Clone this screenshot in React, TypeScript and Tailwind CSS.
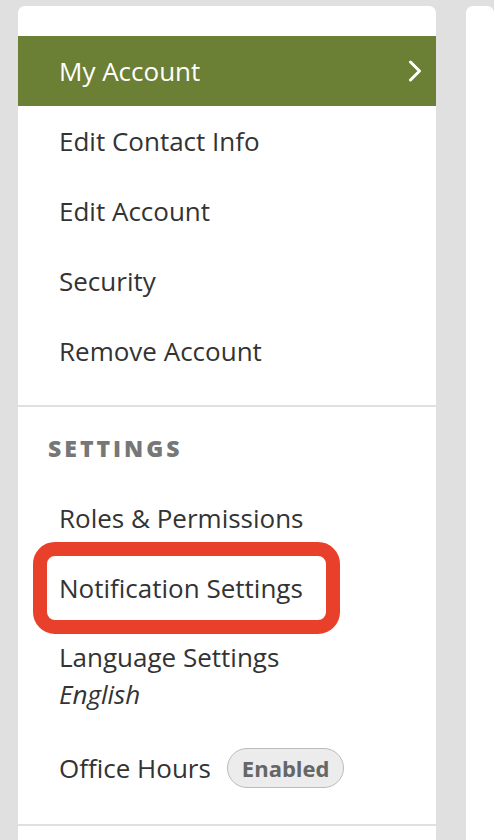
const accountLinks = ["Edit Contact Info", "Edit Account", "Security", "Remove Account"];

function NavRow({ children }: { children: React.ReactNode }) {
  return <div className="h-[70px] flex items-center pl-[41px] text-[26px] text-[#333]">{children}</div>;
}

export default function App() {
  return (
    <div
      className="min-h-[840px] bg-[#e0e0e0] flex gap-[30px] pl-[18px] pt-[6px] overflow-hidden"
      style={{ fontFamily: "'Open Sans', 'DejaVu Sans', sans-serif" }}
    >
      {/* Sidebar */}
      <aside className="w-[418px] shrink-0 bg-white rounded-t-[7px] pt-[30px] min-h-[900px]">
        <div className="h-[70px] bg-[#6b7f35] flex items-center justify-between pl-[41px] pr-[14px] text-[26px] text-white">
          <span>My Account</span>
          <svg width="14" height="22" viewBox="0 0 14 22" fill="none">
            <path d="M2.5 2 L11.5 11 L2.5 20" stroke="white" strokeWidth="3" strokeLinecap="round" strokeLinejoin="round" />
          </svg>
        </div>
        {accountLinks.map((l) => (
          <NavRow key={l}>{l}</NavRow>
        ))}
        <div className="h-[19px]" />
        <div className="h-[2px] bg-[#e0e0e0]" />

        <div className="pt-[29px] pb-[23px] pl-[30px] text-[23px] font-extrabold tracking-[0.13em] text-[#777] leading-[24px]">
          SETTINGS
        </div>
        <NavRow>Roles &amp; Permissions</NavRow>
        <div className="h-[70px] flex items-center pl-[15px]">
          <div className="h-[92px] w-[307px] shrink-0 rounded-[22px] border-[14px] border-[#e8402a] flex items-center pl-[12px] text-[26px] text-[#333]">
            Notification Settings
          </div>
        </div>
        <div className="pl-[41px] pt-[16px] pb-[17px] text-[26px] text-[#333] leading-[37px]">
          <div>Language Settings</div>
          <div className="italic">English</div>
        </div>
        <div className="h-[70px] mt-[3px] flex items-center gap-[16px] pl-[41px] text-[26px] text-[#333]">
          <span>Office Hours</span>
          <span className="h-[40px] px-[14px] flex items-center rounded-full bg-[#ececec] border-[1.5px] border-[#bbb] text-[22px] font-bold text-[#666]">
            Enabled
          </span>
        </div>
        <div className="h-[21px]" />
        <div className="h-[2px] bg-[#e0e0e0]" />
      </aside>

      {/* Main panel edge */}
      <main className="flex-1 bg-white rounded-t-[7px] min-h-[900px]" />
    </div>
  );
}
